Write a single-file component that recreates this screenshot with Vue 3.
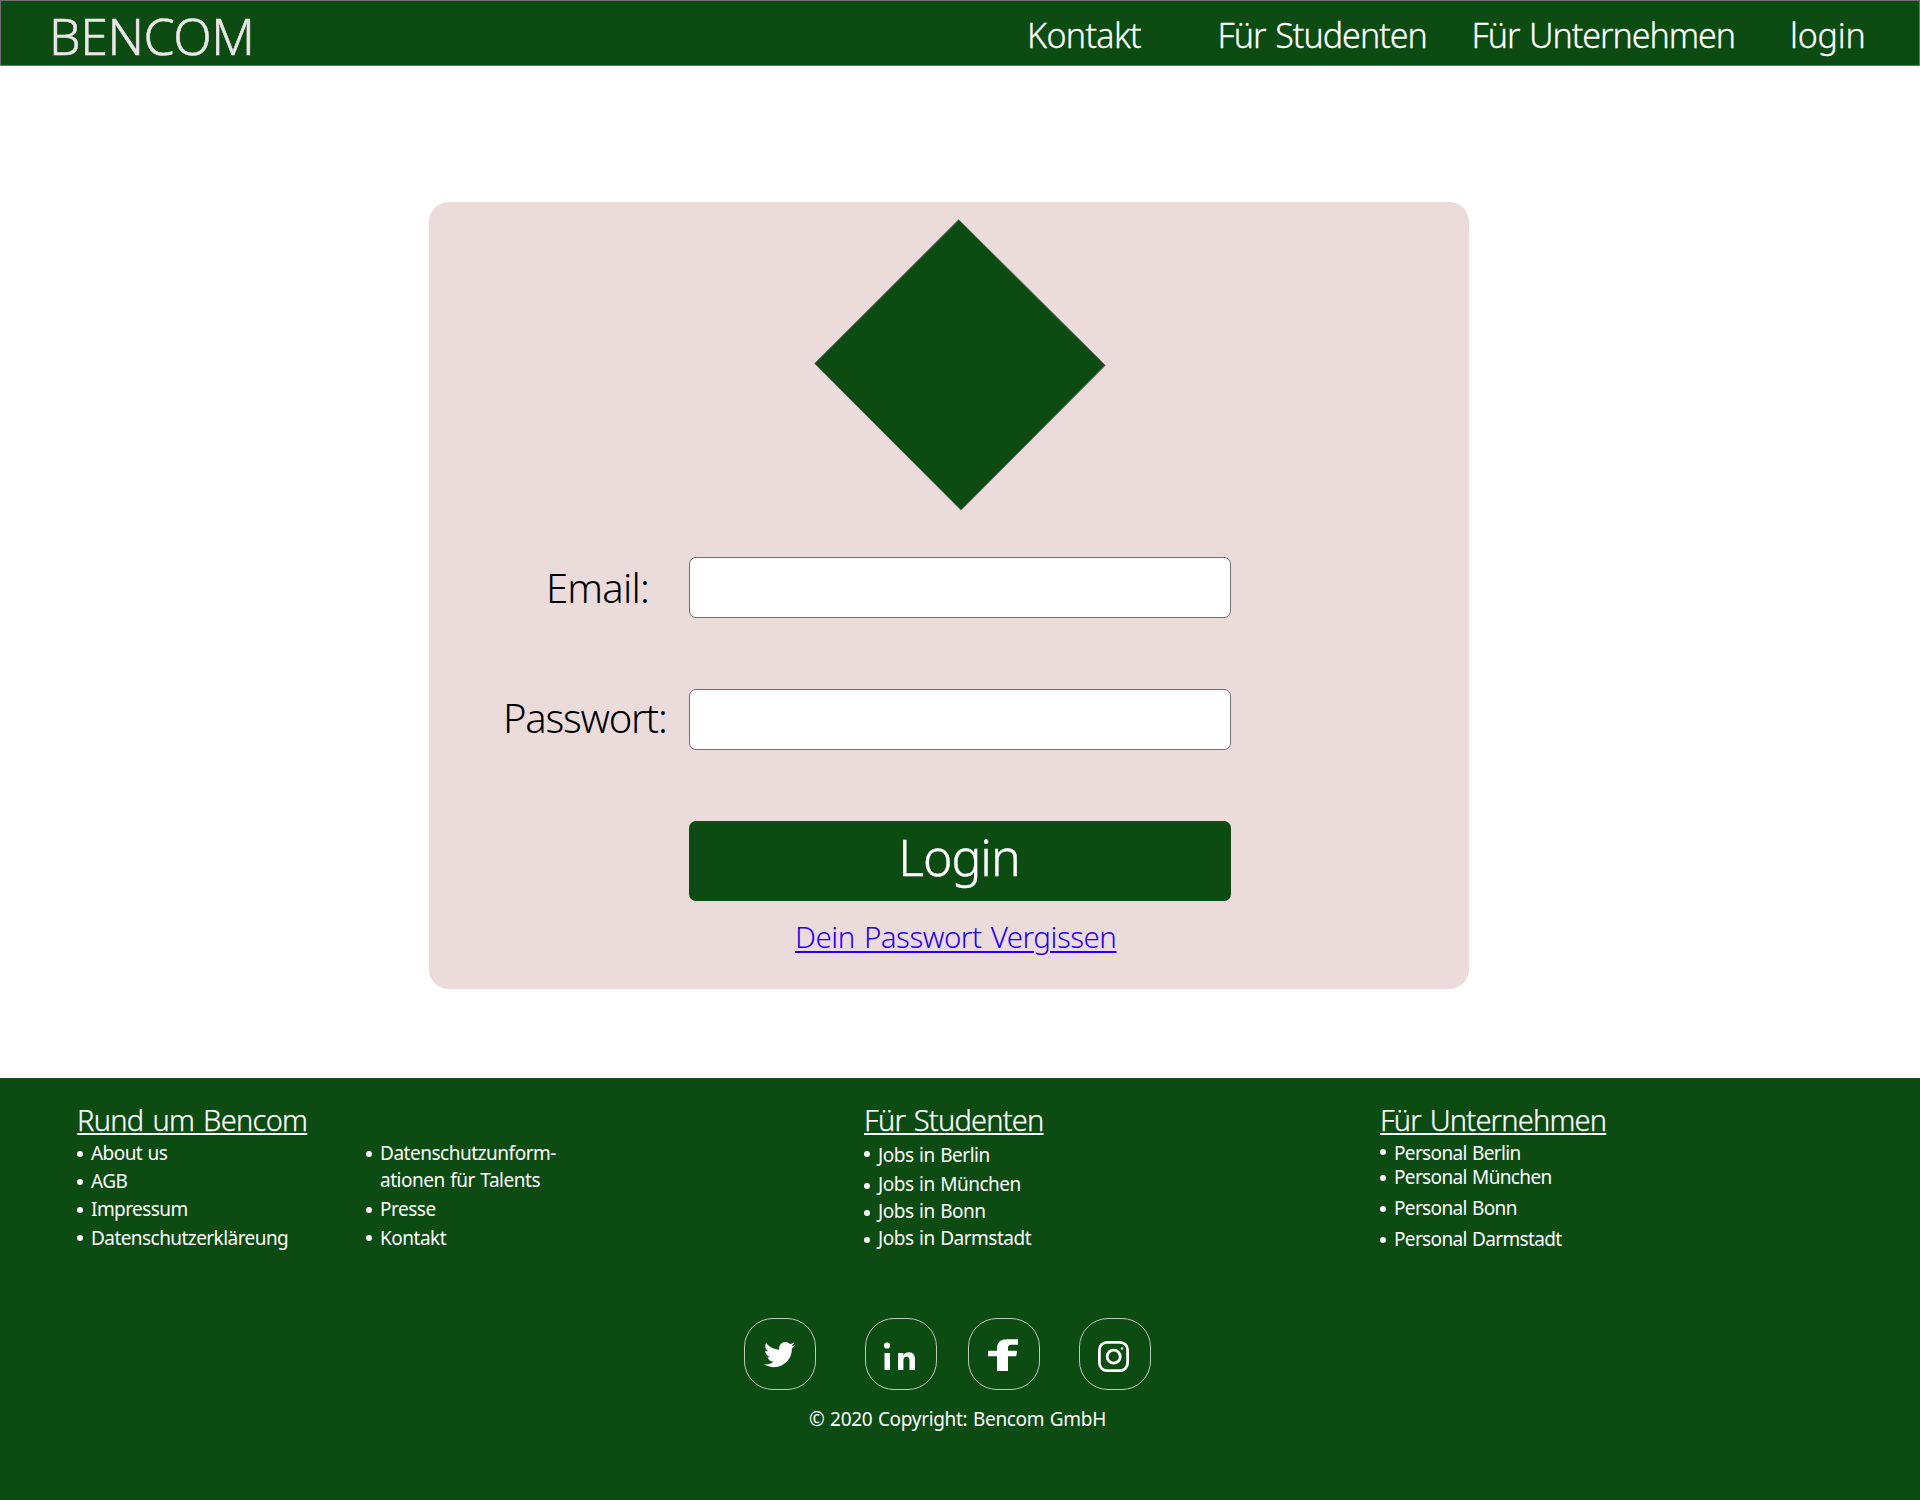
<script setup>
const nav = [
  { text: 'Kontakt', spacing: -0.65 },
  { text: 'Für Studenten', spacing: -0.98 },
  { text: 'Für Unternehmen', spacing: -1.03 },
  { text: 'login', spacing: -0.2 },
]

// gap: space above the entry, dot: vertical offset of its bullet
const columns = [
  {
    title: 'Rund um Bencom',
    titleSpacing: -0.7,
    spacing: -0.56,
    indent: 8,
    links: [
      { text: 'About us', gap: 1, dot: 10 },
      { text: 'AGB', gap: 4, dot: 10 },
      { text: 'Impressum', gap: 4, dot: 10 },
      { text: 'Datenschutzerkläreung', gap: 5, dot: 9 },
    ],
  },
  {
    title: '',
    titleSpacing: 0,
    spacing: -0.48,
    indent: 8,
    links: [
      { text: 'Datenschutzunform-', gap: 1, dot: 10 },
      { text: 'ationen für Talents', gap: 3, dot: null },
      { text: 'Presse', gap: 5, dot: 10 },
      { text: 'Kontakt', gap: 5, dot: 9 },
    ],
  },
  {
    title: 'Für Studenten',
    titleSpacing: -0.78,
    spacing: -0.48,
    indent: 8,
    links: [
      { text: 'Jobs in Berlin', gap: 3, dot: 8 },
      { text: 'Jobs in München', gap: 5, dot: 11 },
      { text: 'Jobs in Bonn', gap: 3, dot: 11 },
      { text: 'Jobs in Darmstadt', gap: 3, dot: 11 },
    ],
  },
  {
    title: 'Für Unternehmen',
    titleSpacing: -0.8,
    spacing: -0.65,
    indent: 8,
    links: [
      { text: 'Personal Berlin', gap: 1, dot: 8 },
      { text: 'Personal München', gap: 0, dot: 10 },
      { text: 'Personal Bonn', gap: 7, dot: 10 },
      { text: 'Personal Darmstadt', gap: 7, dot: 10 },
    ],
  },
]
</script>

<template>
  <div class="page">
    <header class="topbar">
      <div class="brand">BENCOM</div>
      <nav class="nav">
        <a v-for="n in nav" :key="n.text" :style="{ letterSpacing: n.spacing + 'px' }">{{ n.text }}</a>
      </nav>
    </header>

    <main class="main">
      <form class="card" @submit.prevent>
        <svg class="logo" width="292" height="292" viewBox="0 0 292 292">
          <polygon points="144.7,0.7 291.3,146.3 147,291.2 0.7,144.5" />
        </svg>
        <div class="field email">
          <label for="email">Email:</label>
          <input id="email" type="text" />
        </div>
        <div class="field password">
          <label for="password">Passwort:</label>
          <input id="password" type="password" />
        </div>
        <button class="submit">Login</button>
        <a class="forgot">Dein Passwort Vergissen</a>
      </form>
    </main>

    <footer class="footer">
      <div class="columns">
        <section v-for="(col, i) in columns" :key="i">
          <h2 :style="{ letterSpacing: col.titleSpacing + 'px' }">{{ col.title }}</h2>
          <ul>
            <li
              v-for="l in col.links"
              :key="l.text"
              :style="{ marginTop: l.gap + 'px', letterSpacing: col.spacing + 'px', gap: col.indent + 'px' }"
            >
              <i :class="{ dot: l.dot !== null }" :style="{ marginTop: (l.dot || 0) + 'px' }"></i>
              <span>{{ l.text }}</span>
            </li>
          </ul>
        </section>
      </div>

      <div class="social">
        <a class="twitter">
          <svg viewBox="0 0 72 72">
            <path
              transform="translate(20 21) scale(0.0607)"
              d="M459.37 151.716c.325 4.548.325 9.097.325 13.645 0 138.72-105.583 298.558-298.558 298.558-59.452 0-114.68-17.219-161.137-47.106 8.447.974 16.568 1.299 25.34 1.299 49.055 0 94.213-16.568 130.274-44.832-46.132-.975-84.792-31.188-98.112-72.772 6.498.974 12.995 1.624 19.818 1.624 9.421 0 18.843-1.3 27.614-3.573-48.081-9.747-84.143-51.98-84.143-102.985v-1.299c13.969 7.797 30.214 12.67 47.431 13.319-28.264-18.843-46.781-51.005-46.781-87.391 0-19.492 5.197-37.36 14.294-52.954 51.655 63.675 129.3 105.258 216.365 109.807-1.624-7.797-2.599-15.918-2.599-24.04 0-57.828 46.782-104.934 104.934-104.934 30.213 0 57.502 12.67 76.67 33.137 23.715-4.548 46.456-13.32 66.599-25.34-7.798 24.366-24.366 44.833-46.132 57.827 21.117-2.273 41.584-8.122 60.426-16.243-14.292 20.791-32.161 39.308-52.628 54.253z"
            />
          </svg>
        </a>
        <a class="linkedin">
          <svg viewBox="0 0 72 72">
            <circle cx="22" cy="27.5" r="3.1" />
            <path d="M19.5 35H25v17h-5.500zM33 35h5.300v2.300c1-1.800 3.100-3 5.700-3 4.300 0 6 2.900 6 7V52h-5.500v-9.200c0-2.500-.9-4-2.900-4-2.200 0-3.200 1.600-3.200 4V52H33z" />
          </svg>
        </a>
        <a class="facebook">
          <svg viewBox="0 0 72 72">
            <path d="M29 53V38.200h-9v-5.400h9v-2.300c0-6 3.500-9.200 10-9.200h11v5.500h-6.500c-2.500 0-3.500 1-3.500 3v3h9.200l-1 5.400H40V53z" />
          </svg>
        </a>
        <a class="instagram">
          <svg viewBox="0 0 72 72">
            <rect class="line" x="20.400" y="24.400" width="28.200" height="28.200" rx="7.500" />
            <circle class="line" cx="34.700" cy="38.700" r="6.500" />
            <circle cx="43" cy="30.500" r="1.200" />
          </svg>
        </a>
      </div>
      <p class="copyright">© 2020 Copyright: Bencom GmbH</p>
    </footer>
  </div>
</template>

<style>
body {
  margin: 0;
  background: #fff;
}
</style>

<style scoped>
.page {
  width: 1920px;
  height: 1500px;
  display: flex;
  flex-direction: column;
  font-family: "Noto Sans", "Open Sans", sans-serif;
  font-weight: 300;
  word-spacing: 2px;
  overflow: hidden;
}
.page * {
  box-sizing: border-box;
}
.topbar {
  flex: none;
  height: 66px;
  display: flex;
  justify-content: space-between;
  padding-left: 48px;
  background: #0c4b12;
  border: 1px solid #707070;
  line-height: 64px;
}
.brand {
  margin-top: 3px;
  font-size: 50px;
  letter-spacing: -0.4px;
  color: #eae7e7;
  -webkit-text-stroke: 0.5px #eae7e7;
}
.nav {
  display: grid;
  grid-template-columns: 190.5px 254px 318.5px 129px;
  margin-top: 2px;
  font-size: 34px;
  color: #fff;
  white-space: nowrap;
  -webkit-text-stroke: 0.3px #fff;
}
.main {
  flex: none;
  height: 1012px;
  padding: 136px 0 0 429px;
}
.card {
  display: flex;
  flex-direction: column;
  width: 1040px;
  height: 787px;
  padding-top: 17px;
  border-radius: 20px;
  background: #ebdbdb;
}
.logo {
  flex: none;
  margin-left: 385px;
  fill: #0c4b12;
  stroke: #707070;
}
.field {
  display: flex;
  height: 61px;
  margin-top: 71px;
  font-size: 40px;
  line-height: 61px;
  color: #000;
}
.field.email {
  margin-top: 46px;
}
.field label {
  width: 260px;
  white-space: nowrap;
}
.email label {
  padding-left: 117px;
  letter-spacing: -0.8px;
}
.password label {
  margin-top: -2px;
  padding-left: 74px;
  letter-spacing: -1.25px;
}
.field input {
  width: 542px;
  height: 61px;
  padding: 0 12px;
  border: 1px solid #707070;
  border-radius: 7px;
  background: #fff;
  font: inherit;
  outline: none;
}
.submit {
  width: 542px;
  height: 80px;
  margin: 71px 0 0 260px;
  padding: 0 2px 8px 0;
  border: 0;
  border-radius: 7px;
  background: #0c4b12;
  color: #fff;
  font: 300 50px/72px "Noto Sans", "Open Sans", sans-serif;
  letter-spacing: -1px;
  -webkit-text-stroke: 0.4px #fff;
}
.forgot {
  align-self: flex-start;
  margin: 16px 0 0 366px;
  font-size: 29.5px;
  line-height: 40px;
  letter-spacing: -0.5px;
  color: #2600f5;
  text-decoration: underline;
  text-decoration-thickness: 2px;
  text-underline-offset: 3px;
}
.footer {
  flex: 1;
  padding-top: 22px;
  background: #0c4b12;
  color: #fff;
}
.columns {
  display: grid;
  grid-template-columns: 289px 498px 516px 1fr;
  height: 218px;
  padding-left: 77px;
}
h2 {
  height: 40px;
  margin: 0;
  font-size: 29px;
  font-weight: 300;
  line-height: 40px;
  text-decoration: underline;
  text-decoration-thickness: 2px;
  text-underline-offset: 2px;
  -webkit-text-stroke: 0.25px #fff;
}
ul {
  margin: 0;
  padding: 0;
  list-style: none;
}
li {
  display: flex;
  height: 24px;
  font-size: 19px;
  font-weight: 400;
  line-height: 24px;
  word-spacing: 1px;
  white-space: nowrap;
}
li i {
  flex: none;
  width: 6px;
  height: 6px;
}
.dot {
  border-radius: 50%;
  background: #fff;
}
.social {
  display: flex;
  padding-left: 744px;
}
.social a {
  width: 72px;
  height: 72px;
  border: 1px solid #b9cbb9;
  border-radius: 29px;
}
.social svg {
  display: block;
  width: 72px;
  height: 72px;
  margin: -1px;
  fill: #fff;
}
.social .line {
  fill: none;
  stroke: #fff;
  stroke-width: 2.800;
}
.linkedin {
  margin-left: 49px;
}
.facebook {
  margin-left: 31px;
}
.instagram {
  margin-left: 39px;
}
.copyright {
  margin: 17px 0 0 809px;
  font-size: 19px;
  font-weight: 400;
  line-height: 24px;
  letter-spacing: -0.32px;
  word-spacing: 1px;
}
</style>
